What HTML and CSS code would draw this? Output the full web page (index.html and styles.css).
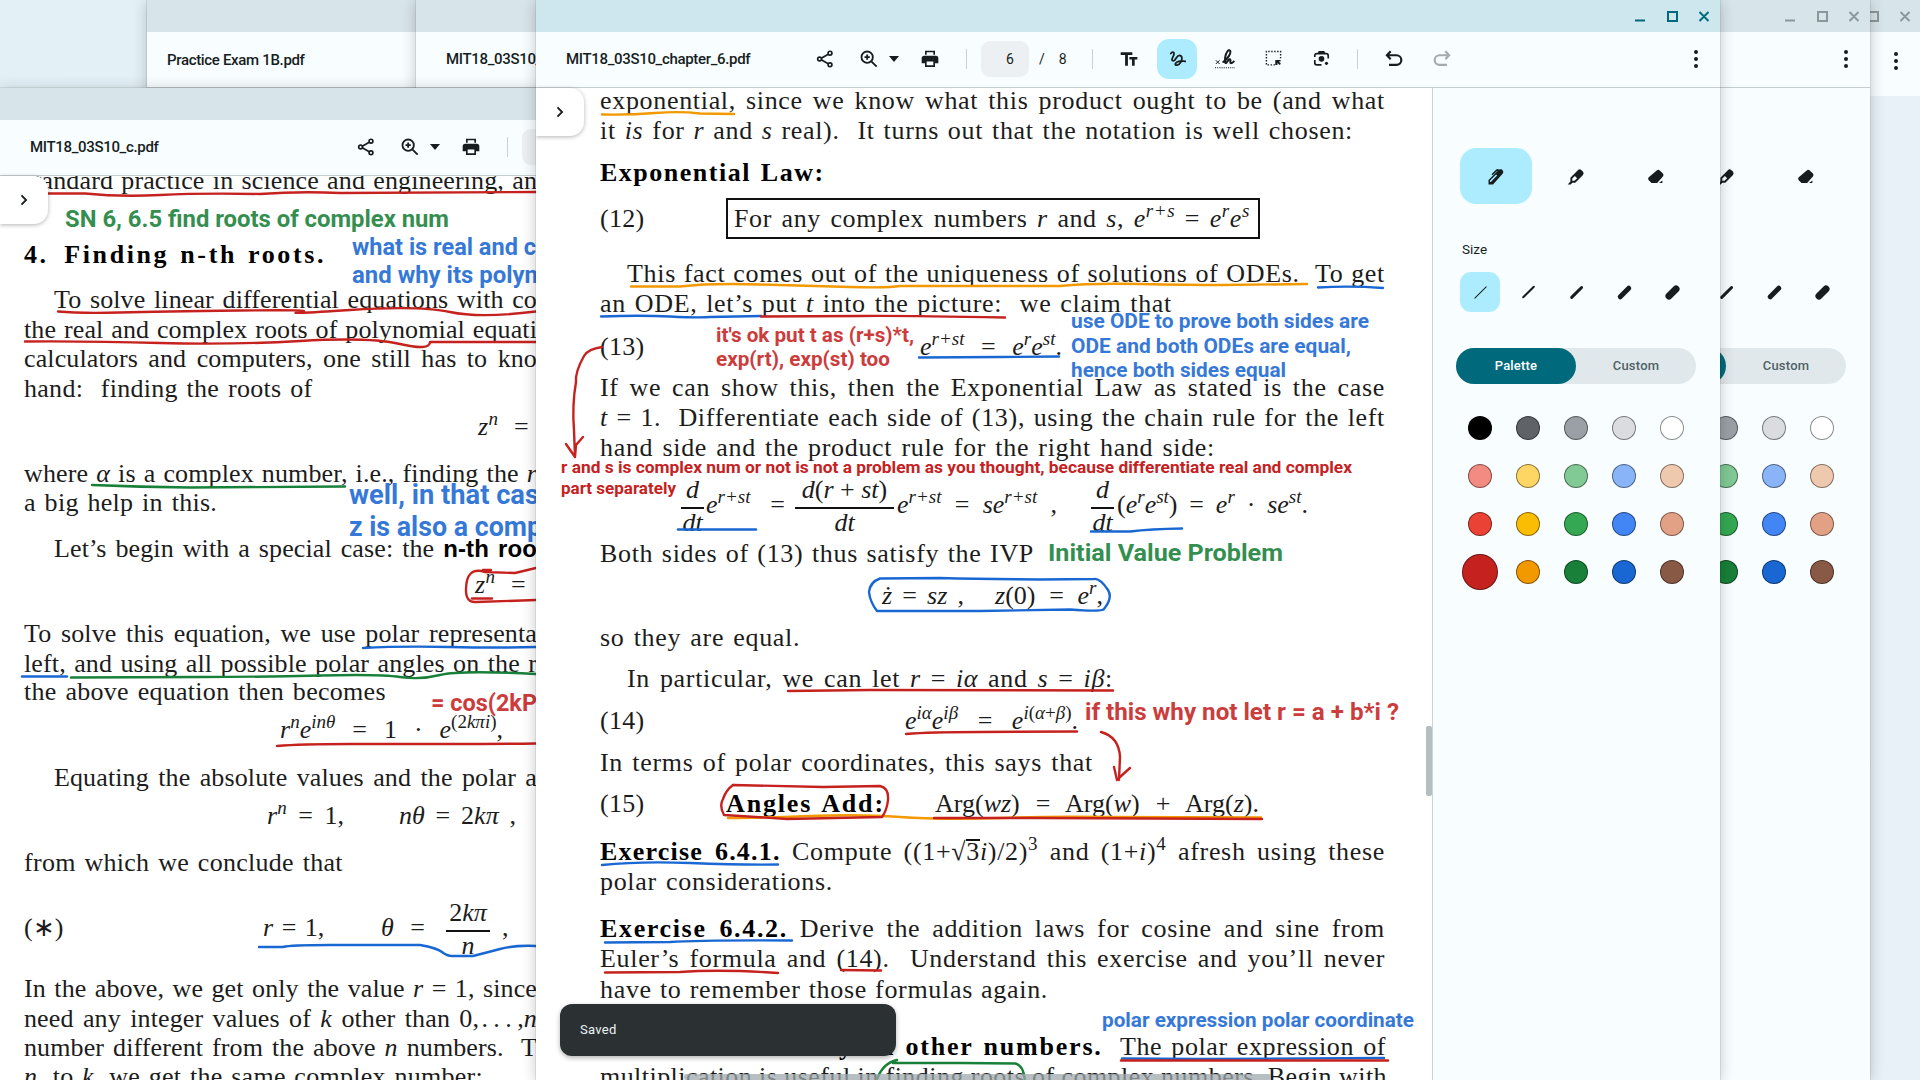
FILE: index.html
```html
<!DOCTYPE html>
<html lang="en">
<head>
<meta charset="utf-8">
<title>Gallery</title>
<link rel="stylesheet" href="styles.css">
</head>
<body>
<svg width="0" height="0" class="defs">
  <symbol id="share" viewBox="0 0 24 24"><g fill="none" stroke="currentColor" stroke-width="2"><circle cx="18" cy="5" r="2.3"/><circle cx="5.5" cy="12" r="2.3"/><circle cx="18" cy="19" r="2.3"/><path d="M7.5 11l8.4-4.8M7.5 13l8.4 4.8"/></g></symbol>
  <symbol id="zoom" viewBox="0 0 24 24"><g fill="none" stroke="currentColor" stroke-width="2.2"><circle cx="9.8" cy="9.8" r="6.8"/><path d="M14.8 14.8l6.4 6.4M9.8 6.6v6.4M6.6 9.8h6.4"/></g></symbol>
  <symbol id="print" viewBox="0 0 24 24"><path fill="currentColor" fill-rule="evenodd" d="M6 2h12v5H6zM8 4v3h8V4zM5 8h14a3 3 0 0 1 3 3v6h-4v4.500H6V17H2v-6a3 3 0 0 1 3-3zm3 7v4.500h8V15z"/></symbol>
  <symbol id="text" viewBox="0 0 24 24"><path fill="currentColor" d="M2 4h14v3.200h-5.300V20H7.300V7.200H2zM12.500 9.500H22v3h-3.200V20h-3.200v-7.500h-3.100z"/></symbol>
  <symbol id="ink" viewBox="0 0 24 24"><path fill="none" stroke="currentColor" stroke-width="2.500" stroke-linecap="round" d="M2.500 5C5 1.800 8.300 3 6.500 7.500S2.500 15 6 15.500 10 7.500 14.500 7.500s4.500 5.500 2 10-8.500 5-7.500 2 7-5 14-3.500"/></symbol>
  <symbol id="sign" viewBox="0 0 24 24"><g fill="none" stroke="currentColor"><path stroke-width="1.200" d="M1 13.500l4.500 4.500M5.500 13.500L1 18"/><path stroke-width="2.400" stroke-linecap="round" d="M10 15.500C15 12 20 5 18 2c-1.600-2-5 2-5.800 8-.5 5.500 0 8 1.500 6.500s3-5 4.400-4-.8 4.500 1 4.500 2.400-1 3.400-2"/><path stroke-width="1.400" stroke-dasharray="1.300 1.300" d="M0 22.500h24"/></g></symbol>
  <symbol id="select" viewBox="0 0 24 24"><path fill="none" stroke="currentColor" stroke-width="2" stroke-dasharray="2 2.200" d="M14 21H2V2h20v10"/><path fill="currentColor" d="M14.500 14H22v2.300h-2.500l3 3-1.900 1.900-3-3V21h-3.100z"/></symbol>
  <symbol id="lens" viewBox="0 0 24 24"><g fill="none" stroke="currentColor" stroke-width="2.400"><path d="M2.500 10V8a3 3 0 0 1 3-3h13a3 3 0 0 1 3 3v4M2.500 14v4a3 3 0 0 0 3 3h6.500"/></g><path fill="currentColor" d="M8 1.500h8L17.500 5h-11z"/><circle cx="12" cy="12.500" r="4" fill="currentColor"/><circle cx="19" cy="18.800" r="2.200" fill="currentColor"/></symbol>
  <symbol id="undo" viewBox="0 0 24 24"><path fill="none" stroke="currentColor" stroke-width="2.600" d="M8 2.800L3.500 7.500 8 12.200M3.500 7.500H15a5.700 5.700 0 0 1 0 11.600H6"/></symbol>
  <symbol id="dots" viewBox="0 0 24 24"><g fill="currentColor"><circle cx="12" cy="3.600" r="2.400"/><circle cx="12" cy="12" r="2.400"/><circle cx="12" cy="20.400" r="2.400"/></g></symbol>
  <symbol id="chevron" viewBox="0 0 24 24"><path fill="none" stroke="currentColor" stroke-width="2.200" d="M9 6.500l5.500 5.500L9 17.500"/></symbol>
  <symbol id="pen" viewBox="0 0 24 24"><path fill="currentColor" fill-rule="evenodd" d="M2 22v-6L14.500 3.600a2 2 0 0 0-1.500.7L7.500 9.800 6 8.300 12 2.300c1.500-1.300 3-1 4 0 2-1.200 4-.5 5 1s1 3.200-.5 4.700L8 22zm3-3.500L13.500 10l-1.400-1.400L4 16.800v1.700z"/></symbol>
  <symbol id="marker" viewBox="0 0 24 24"><path fill="currentColor" fill-rule="evenodd" d="M1 22l3.500-4V13L14.500 3a3.500 3.500 0 0 1 4.500-.5l2.500 2.500a3.500 3.500 0 0 1-.5 4.500L11 19.500H7L5 22zM7 14v3h3l3.500-3.500-3-3z"/></symbol>
  <symbol id="eraser" viewBox="0 0 24 24"><path fill="currentColor" d="M13 3.200a3 3 0 0 1 4 0l4.200 4.200a3 3 0 0 1 0 4L13.500 20H6l-3.700-3.800a3 3 0 0 1 0-4zM16 20l4.500-3.500V20z"/></symbol>
</svg>

<section class="window win-menu idle">
  <header class="titlebar"><svg class="ctl" viewBox="0 0 96 32"><path d="M48 12h9v9h-9zM79.500 12l9 9M88.500 12l-9 9"/></svg></header>
  <div class="toolbar tall"><svg class="icon"><use href="#dots"/></svg></div>
</section>

<section class="window win-exam idle">
  <header class="titlebar"></header>
  <div class="toolbar"><span class="name">Practice Exam 1B.pdf</span></div>
</section>

<section class="window win-chapter idle">
  <header class="titlebar"></header>
  <div class="toolbar"><span class="name">MIT18_03S10_</span></div>
</section>

<section class="window win-side idle">
  <header class="titlebar"><svg class="ctl" viewBox="0 0 96 32"><path d="M15 20.500h10M48 12h9v9h-9zM79.500 12l9 9M88.500 12l-9 9"/></svg></header>
  <div class="toolbar end"><svg class="icon"><use href="#dots"/></svg></div>
  <div class="body">
    <main class="page"></main>
    <aside class="panel">
      <div class="tools"><span class="tool"></span><span class="tool"><svg class="icon"><use href="#marker"/></svg></span><span class="tool"><svg class="icon"><use href="#eraser"/></svg></span></div>
      <h2 class="label">&nbsp;</h2>
      <div class="sizes"><span class="size on"><i class="s1"></i></span><span class="size"><i class="s2"></i></span><span class="size"><i class="s3"></i></span><span class="size"><i class="s4"></i></span><span class="size"><i class="s5"></i></span></div>
      <div class="tabs"><span class="tab on"></span><span class="tab">Custom</span></div>
      <div class="swatches">
        <b class="c-black"></b><b class="c-dgray"></b><b class="c-gray"></b><b class="c-lgray"></b><b class="c-white"></b>
        <b class="c-pink"></b><b class="c-lyellow"></b><b class="c-lgreen"></b><b class="c-lblue"></b><b class="c-peach"></b>
        <b class="c-red"></b><b class="c-yellow"></b><b class="c-green"></b><b class="c-blue"></b><b class="c-tan"></b>
        <b class="c-crimson"></b><b class="c-orange"></b><b class="c-dgreen"></b><b class="c-dblue"></b><b class="c-brown"></b>
      </div>
    </aside>
  </div>
</section>

<section class="window win-notes idle">
  <header class="titlebar"></header>
  <div class="toolbar">
    <span class="name">MIT18_03S10_c.pdf</span>
    <div class="actions">
      <svg class="icon"><use href="#share"/></svg>
      <svg class="icon zoomer"><use href="#zoom"/></svg><i class="caret"></i>
      <svg class="icon printer"><use href="#print"/></svg>
      <i class="rule"></i><span class="pagebox"></span>
    </div>
  </div>
  <div class="body">
    <main class="page notes">
      <p class="full">standard practice in science and engineering, an</p>
      <p><strong class="head">4.&ensp;Finding n-th roots.</strong></p>
      <p class="full in">To solve linear differential equations with co</p>
      <p class="full">the real and complex roots of polynomial equati</p>
      <p class="full">calculators and computers, one still has to kno</p>
      <p>hand:&nbsp; finding the roots of</p>
      <p class="eq e-zn"><i>z<sup>n</sup></i> =</p>
      <p class="full">where <i>α</i> is a complex number, i.e., finding the <i>r</i></p>
      <p>a big help in this.</p>
      <p class="full in">Let’s begin with a special case: the <b class="sans">n-th roo</b></p>
      <p class="eq e-zn2"><i>z<sup>n</sup></i> =</p>
      <p class="full">To solve this equation, we use polar representa</p>
      <p class="full">left, and using all possible polar angles on the r</p>
      <p>the above equation then becomes</p>
      <p class="eq e-polar"><i>r<sup>n</sup>e<sup>inθ</sup></i> = 1 · <i>e</i><sup>(2<i>kπi</i>)</sup>,</p>
      <p class="full in">Equating the absolute values and the polar a</p>
      <p class="eq e-split"><span class="w77"><i>r<sup>n</sup></i> = 1,</span><span class="w115"><i>nθ</i> = 2<i>kπ</i> ,</span></p>
      <p>from which we conclude that</p>
      <p class="star"><span>(∗)</span><span class="st-r"><i>r</i> = 1,</span><span class="st-t"><i>θ</i> =</span><span class="frac f42"><span>2<i>kπ</i></span><span><i>n</i></span></span><span class="st-c">,</span></p>
      <p class="full">In the above, we get only the value <i>r</i> = 1, since</p>
      <p class="full">need any integer values of <i>k</i> other than 0,&#8202;.&#8201;.&#8201;.&#8201;,<i>n</i></p>
      <p class="full">number different from the above <i>n</i> numbers.&nbsp; T</p>
      <p class="w458"><i>n</i>, to <i>k</i>, we get the same complex number:</p>
    </main>
    <svg class="ink" viewBox="0 176 536 904">
      <g class="red">
        <path d="M40 193.500L85 193.500Q120 197 160 195T260 194Q300 191 340 193L536 192"/>
        <path d="M58 311.500Q80 313.500 120 312.500T240 310.500T300 312T350 310T450 312T536 311.500"/>
        <path d="M25 341.500Q90 341 160 343T300 341T400 344T430 342L536 342"/>
        <path d="M536 568L515 573L485 572Q466 566 466 590Q466 603 476 602L536 600M472 598.500h20M483 570h8"/>
        <path d="M277 746Q300 744 350 744T450 744T536 743.500"/>
      </g>
      <g class="green">
        <path d="M92 485Q140 487 190 487.500L345 486.500"/>
        <path d="M71 677.500Q140 677 200 677T320 675.500T400 677T440 675T536 674"/>
      </g>
      <g class="blue">
        <path d="M363 648Q400 646 450 647T536 647"/><path d="M22 676.500H67"/>
        <path d="M259 947L283 947Q290 945 330 945L420 945Q437 948 442 952T452 956L473 956Q485 953 500 949T536 946"/>
      </g>
      <text class="tgreen" x="65" y="227" font-size="23.500" textLength="384" lengthAdjust="spacingAndGlyphs">SN 6, 6.5 find roots of complex num</text>
      <text class="tblue" x="352" y="255" font-size="23.500" textLength="184" lengthAdjust="spacingAndGlyphs">what is real and c</text>
      <text class="tblue" x="352" y="283" font-size="23.500" textLength="186" lengthAdjust="spacingAndGlyphs">and why its polyn</text>
      <text class="tblue" x="349" y="504" font-size="27" textLength="190" lengthAdjust="spacingAndGlyphs">well, in that cas</text>
      <text class="tblue" x="349" y="536" font-size="27" textLength="193" lengthAdjust="spacingAndGlyphs">z is also a comp</text>
      <text class="tred" x="431" y="710.500" font-size="23.500" textLength="106" lengthAdjust="spacingAndGlyphs">= cos(2kP</text>
    </svg>
    <span class="drawer"><svg class="icon"><use href="#chevron"/></svg></span>
  </div>
</section>

<section class="window win-main">
  <header class="titlebar"><svg class="ctl" viewBox="0 0 96 32"><path d="M15 20.500h10M48 12h9v9h-9zM79.500 12l9 9M88.500 12l-9 9"/></svg></header>
  <div class="toolbar">
    <span class="name">MIT18_03S10_chapter_6.pdf</span>
    <div class="actions">
      <svg class="icon"><use href="#share"/></svg>
      <svg class="icon zoomer"><use href="#zoom"/></svg><i class="caret"></i>
      <svg class="icon printer"><use href="#print"/></svg>
      <i class="rule"></i><span class="pagebox">6</span><span class="total"><span>/</span><span>8</span></span><i class="rule r2"></i>
      <span class="act"><svg class="icon"><use href="#text"/></svg></span>
      <span class="act on"><svg class="icon small"><use href="#ink"/></svg></span>
      <span class="act"><svg class="icon"><use href="#sign"/></svg></span>
      <span class="act"><svg class="icon small"><use href="#select"/></svg></span>
      <span class="act"><svg class="icon small"><use href="#lens"/></svg></span>
      <i class="rule r3"></i>
      <span class="act"><svg class="icon"><use href="#undo"/></svg></span>
      <span class="act off"><svg class="icon flip"><use href="#undo"/></svg></span>
    </div>
    <svg class="icon more"><use href="#dots"/></svg>
  </div>
  <div class="body">
    <main class="page chapter">
      <p class="full">exponential, since we know what this product ought to be (and what</p>
      <p class="w751">it <i>is</i> for <i>r</i> and <i>s</i> real).&nbsp; It turns out that the notation is well chosen:</p>
      <p><strong>Exponential Law:</strong></p>
      <p class="law"><span>(12)</span><span class="boxed">For any complex numbers <i>r</i> and <i>s</i>, <i>e<sup>r+s</sup></i> = <i>e<sup>r</sup>e<sup>s</sup></i></span></p>
      <p class="full in">This fact comes out of the uniqueness of solutions of ODEs.&nbsp; To get</p>
      <p class="w572">an ODE, let’s put <i>t</i> into the picture:&nbsp; we claim that</p>
      <p class="num"><span>(13)</span><span class="n13"><i>e<sup>r+st</sup></i> = <i>e<sup>r</sup>e<sup>st</sup></i>.</span></p>
      <p class="full">If we can show this, then the Exponential Law as stated is the case</p>
      <p class="full"><i>t</i> = 1.&nbsp; Differentiate each side of (13), using the chain rule for the left</p>
      <p class="w615">hand side and the product rule for the right hand side:</p>
      <p class="deriv"><span class="frac f24"><i>d</i><i>dt</i></span><span class="d1"><i>e<sup>r+st</sup></i> =</span><span class="frac f99"><span><i>d</i>(<i>r</i> + <i>st</i>)</span><i>dt</i></span><span class="d2"><i>e<sup>r+st</sup></i> = <i>se<sup>r+st</sup></i> ,</span><span class="frac f24"><i>d</i><i>dt</i></span><span class="d3">(<i>e<sup>r</sup>e<sup>st</sup></i>) = <i>e<sup>r</sup></i> · <i>se<sup>st</sup></i>.</span></p>
      <p class="w433">Both sides of (13) thus satisfy the IVP</p>
      <p class="ivp"><span class="i1"><i>ż</i> = <i>sz</i> ,</span><span class="i2"><i>z</i>(0) = <i>e<sup>r</sup></i>,</span></p>
      <p>so they are equal.</p>
      <p class="w512">In particular, we can let <i>r</i> = <i>iα</i> and <i>s</i> = <i>iβ</i>:</p>
      <p class="num"><span>(14)</span><span class="n14"><i>e<sup>iα</sup>e<sup>iβ</sup></i> = <i>e</i><sup><i>i</i>(<i>α</i>+<i>β</i>)</sup>.</span></p>
      <p class="w491">In terms of polar coordinates, this says that</p>
      <p class="num"><span>(15)</span><strong class="n15">Angles Add:</strong><span class="arg">Arg(<i>wz</i>) = Arg(<i>w</i>) + Arg(<i>z</i>).</span></p>
      <p class="full"><strong class="ex">Exercise 6.4.1.</strong> Compute ((1+<span class="root">√<u>3</u></span><i>i</i>)/2)<sup>3</sup> and (1+<i>i</i>)<sup>4</sup> afresh using these</p>
      <p>polar considerations.</p>
      <p class="full"><strong class="ex2">Exercise 6.4.2.</strong> Derive the addition laws for cosine and sine from</p>
      <p class="full">Euler’s formula and (14).&nbsp; Understand this exercise and you’ll never</p>
      <p class="w447">have to remember those formulas again.</p>
      <p class="tail"><strong class="t1">y on other numbers.</strong><span class="t2">The polar expression of</span></p>
      <p class="full tight">multiplication is useful in finding roots of complex numbers. Begin with</p>
    </main>
    <aside class="panel">
      <div class="tools"><span class="tool on"><svg class="icon"><use href="#pen"/></svg></span><span class="tool"><svg class="icon"><use href="#marker"/></svg></span><span class="tool"><svg class="icon"><use href="#eraser"/></svg></span></div>
      <h2 class="label">Size</h2>
      <div class="sizes"><span class="size on"><i class="s1"></i></span><span class="size"><i class="s2"></i></span><span class="size"><i class="s3"></i></span><span class="size"><i class="s4"></i></span><span class="size"><i class="s5"></i></span></div>
      <div class="tabs"><span class="tab on">Palette</span><span class="tab">Custom</span></div>
      <div class="swatches">
        <b class="c-black"></b><b class="c-dgray"></b><b class="c-gray"></b><b class="c-lgray"></b><b class="c-white"></b>
        <b class="c-pink"></b><b class="c-lyellow"></b><b class="c-lgreen"></b><b class="c-lblue"></b><b class="c-peach"></b>
        <b class="c-red"></b><b class="c-yellow"></b><b class="c-green"></b><b class="c-blue"></b><b class="c-tan"></b>
        <b class="c-crimson picked"></b><b class="c-orange"></b><b class="c-dgreen"></b><b class="c-dblue"></b><b class="c-brown"></b>
      </div>
    </aside>
    <svg class="ink" viewBox="536 88 896 992">
      <g class="orange">
        <path d="M602 114.500Q630 115 655 113T700 113.500L734 114"/>
        <path d="M631 286.500L680 286.500Q710 283 760 284.500T850 287T900 286H1060Q1090 283 1140 284T1220 285L1307 284"/>
        <path d="M728 818Q760 818 810 816T900 817T1000 818T1100 817L1261 817.500"/>
      </g>
      <g class="blue">
        <path d="M1318 287.500Q1350 285.500 1383 288"/>
        <path d="M601 316.500Q640 315 670 316.500T710 317L761 316"/>
        <path d="M919 357.500L1000 357L1059 356.500"/>
        <path d="M678 529.500H756"/><path d="M1091 531.500H1130Q1150 529 1182 528.500"/>
        <path d="M877 611L980 611L1070 609.500Q1102 612 1104 609Q1113 598 1108 590Q1100 578 1094 579L1040 579.500Q980 579 940 578L880 578.500Q870 582 869 592Q870 602 877 611"/>
        <path d="M602 865Q640 861 690 863T778 864.500"/><path d="M605 942.500L670 942Q700 940 792 940.500"/>
        <path d="M1122 1058.500L1200 1059L1384 1058"/>
      </g>
      <g class="red">
        <path d="M761 316.500L860 316Q900 315.500 1005 317.500"/>
        <path d="M602 347Q588 349 584 356Q575 372 576 382Q572 405 574 430L575 457M566 444L575 457L576 445L583 437"/>
        <path d="M788 691L870 690L1113 690.500"/>
        <path d="M906 734Q930 732 980 732L1077 731.500"/>
        <path d="M1101 732Q1119 737 1120 757L1119 780M1114 767L1117 780Q1122 775 1130 768"/>
        <path d="M733 785L823 787L880 786Q889 788 888 800Q887 810 882 817Q830 818 787 819L724 815Q719 806 723 799Q726 790 733 785"/>
        <path d="M934 818L1040 818L1262 819"/>
        <path d="M605 972.500L680 972Q720 969 778 973"/><path d="M841 970L881 970.500"/>
        <path d="M1121 1060.500H1388"/>
      </g>
      <g class="green"><path d="M876 1082Q882 1063 897 1060M893 1063L960 1063L1015 1063.500Q1024 1065 1025 1082"/></g>
      <text class="tred" x="716" y="341.500" font-size="21" textLength="198" lengthAdjust="spacingAndGlyphs">it's ok put t as (r+s)*t,</text>
      <text class="tred" x="716" y="366" font-size="21" textLength="174" lengthAdjust="spacingAndGlyphs">exp(rt), exp(st) too</text>
      <text class="tblue" x="1071" y="328" font-size="21" textLength="298" lengthAdjust="spacingAndGlyphs">use ODE to prove both sides are</text>
      <text class="tblue" x="1071" y="352.500" font-size="21" textLength="280" lengthAdjust="spacingAndGlyphs">ODE and both ODEs are equal,</text>
      <text class="tblue" x="1071" y="377" font-size="21" textLength="215" lengthAdjust="spacingAndGlyphs">hence both sides equal</text>
      <text class="tred solid" x="561" y="473" font-size="16.500" textLength="791" lengthAdjust="spacingAndGlyphs">r and s is complex num or not is not a problem as you thought, because differentiate real and complex</text>
      <text class="tred solid" x="561" y="494" font-size="16.500" textLength="115" lengthAdjust="spacingAndGlyphs">part separately</text>
      <text class="tgreen" x="1048" y="561" font-size="24" textLength="235" lengthAdjust="spacingAndGlyphs">Initial Value Problem</text>
      <text class="tred" x="1085" y="720" font-size="24" textLength="314" lengthAdjust="spacingAndGlyphs">if this why not let r = a + b*i ?</text>
      <text class="tblue" x="1102" y="1027" font-size="21" textLength="312" lengthAdjust="spacingAndGlyphs">polar expression polar coordinate</text>
    </svg>
    <i class="vbar"></i><i class="hbar"></i>
    <span class="drawer"><svg class="icon"><use href="#chevron"/></svg></span>
    <div class="toast">Saved</div>
  </div>
</section>
</body>
</html>
```
FILE: styles.css
```css
* { box-sizing: border-box; }
body { margin: 0; width: 1920px; height: 1080px; overflow: hidden; position: relative; background: linear-gradient(90deg, #e3f1f6, #e9f1f8); font-family: Roboto, "Liberation Sans", sans-serif; color: #171d1e; }
.defs { position: absolute; }
p, h2 { margin: 0; }

.window { position: absolute; top: 0; width: 1184px; height: 1080px; display: flex; flex-direction: column; overflow: hidden; background: #f8fdff; box-shadow: 0 0 1px rgba(0,0,0,.45), 0 2px 14px rgba(0,0,0,.22); }
.win-menu { left: 1000px; width: 920px; height: 96px; box-shadow: none; }
.win-exam { left: 147px; height: 700px; width: 600px; }
.win-chapter { left: 416px; height: 700px; width: 600px; }
.win-side { left: 686px; }
.win-notes { left: 0; top: 88px; height: 992px; }
.win-main { left: 536px; }

.titlebar { flex: none; height: 32px; display: flex; justify-content: flex-end; background: #cee7ee; color: #006a7c; }
.idle .titlebar { background: #d7e4e9; color: #8b9799; }
.ctl { width: 96px; height: 32px; margin-right: 4px; flex: none; fill: none; stroke: currentColor; stroke-width: 2; }
.win-menu .ctl { margin-right: 3px; }

.toolbar { flex: none; height: 56px; display: flex; align-items: center; padding: 0 13px 2px 30px; border-bottom: 1px solid #c5ced1; background: #f8fdff; }
.win-menu .toolbar { height: 64px; padding: 0 14px 7px 0; justify-content: flex-end; border: 0; }
.toolbar.end { justify-content: flex-end; padding-right: 14px; }
.win-exam .toolbar { padding: 0 0 0 20px; }
.win-notes .toolbar { padding-bottom: 1px; }
.name { width: 283px; flex: none; font-size: 15px; font-weight: 500; letter-spacing: -.330px; white-space: nowrap; color: #171d1e; }
.win-notes .name { width: 324px; }
.icon { width: 20px; height: 20px; flex: none; display: block; }
.icon.small { width: 17px; height: 17px; }
.actions { display: flex; align-items: center; }
.win-main .actions { margin-left: -34px; }
.win-notes .actions { margin-left: 2px; }
.zoomer { margin-left: 24px; }
.caret { margin-left: 10px; border: 5px solid transparent; border-top: 6px solid #171d1e; border-bottom: 0; }
.printer { margin-left: 21px; }
.rule { width: 1px; height: 20px; background: #c9d1d4; margin-left: 26px; }
.pagebox { width: 48px; height: 36px; margin-left: 14px; border-radius: 9px; background: #ecf0f3; font-size: 14px; line-height: 36px; padding-left: 25px; }
.total { display: flex; gap: 14px; margin-left: 10px; font-size: 14px; width: 36px; }
.r2 { margin-left: 17px; }
.act { width: 40px; height: 40px; margin-right: 8px; border-radius: 12px; display: grid; place-items: center; }
.r2 + .act { margin-left: 16px; }
.act.on { background: #adecff; }
.r3 { margin: 0 16px 0 8px; }
.act.off { color: #a4abad; }
.flip { transform: scaleX(-1); }
.more { margin-left: auto; margin-right: 1px; }

.body { flex: 1; min-height: 0; display: flex; position: relative; }
.page { flex: 1; background: #fff; overflow: hidden; min-width: 0; }
.notes, .chapter { display: grid; align-items: end; align-content: start; padding-top: 1.300px; font: 26px/30px "Liberation Serif", serif; letter-spacing: .680px; word-spacing: 2px; color: #1c1c1c; }
.chapter { padding-left: 64px; grid-template-rows: 27px 30px 42px 45.300px 55.500px 30.200px 42.300px 41px 30px 30.300px 56.700px 49.700px 41.600px 41.700px 41px 42.700px 41.300px 41.700px 47.600px 30.700px 46.700px 30px 30.600px 57px 30.700px; }
.notes { padding-left: 24px; letter-spacing: .280px; grid-template-rows: 18.500px 74.400px 44.600px 30px 29.400px 30px 38.300px 46.700px 29.300px 45.700px 36.300px 48.700px 30px 28.300px 38px 48px 38px 46.700px 65.300px 60.700px 30px 29px 29.300px; }
.page p { height: 30px; white-space: nowrap; }
.full, .w751, .w572, .w615, .w433, .w512, .w491, .w447, .w458, .e-zn, .e-zn2, .e-polar, .w77, .w115, .boxed, .n13, .n14, .arg, .d1, .d2, .d3, .i1, .i2, .t2 { text-align: justify; text-align-last: justify; }
.page p.full, .page p[class^="w"] { word-spacing: 0; }
.chapter .full { width: 785px; }
.notes .full { width: 513px; letter-spacing: .120px; }
.chapter .tight { letter-spacing: .450px; }
.full.in { padding-left: 27px; }
.notes .full.in { padding-left: 30px; }
.w751 { width: 753px; } .w572 { width: 572px; } .w615 { width: 615px; } .w433 { width: 434px; }
.page .w512 { width: 486px; margin-left: 27px; } .w491 { width: 493px; } .w447 { width: 448px; } .w458 { width: 459px; }
strong { letter-spacing: 1.500px; color: #000; }
.head { letter-spacing: 2.600px; }
.sans { font-family: "Liberation Sans", sans-serif; font-size: 24px; color: #000; }
sup { font-size: 19px; line-height: 0; vertical-align: 10px; }
.law, .num, .star, .deriv, .ivp, .tail, .e-split { display: flex; letter-spacing: 0; }
.law > :first-child, .num > :first-child { width: 126px; flex: none; letter-spacing: .300px; }
.boxed { width: 534px; height: 41px; margin-top: -6px; padding: 4px 8px 0 6px; border: 2px solid #111; letter-spacing: .600px; }
.n13 { width: 142px; margin-left: 194px; }
.n14 { width: 173px; margin-left: 179px; }
.n15 { width: 160px; margin-left: 0; letter-spacing: 1.850px; }
.arg { width: 324px; margin-left: 49px; }
.deriv { margin-left: 81px; word-spacing: 0; }
.frac { display: flex; flex-direction: column; align-items: center; flex: none; height: 62px; margin-top: -15px; line-height: 30px; }
.frac > :first-child { height: 34px; }
.frac > :last-child { border-top: 2px solid #111; width: 100%; text-align: center; padding-top: 0; line-height: 28px; }
.f24 { width: 23px; } .f99 { width: 99px; } .f42 { width: 44px; }
.d1 { width: 79px; margin: 0 10px 0 2px; } .d2 { width: 160px; margin: 0 34px 0 3px; } .d3 { width: 191px; margin-left: 3px; }
.ivp { margin-left: 282px; } .i1 { width: 82px; } .i2 { width: 108px; margin-left: 31px; }
.t1 { width: 279px; margin-left: 239px; letter-spacing: 1.800px; } .t2 { width: 262px; margin-left: 2px; letter-spacing: .600px; }
.ex { letter-spacing: 1.200px; } .ex2 { letter-spacing: 1.650px; }
.root u { display: inline-block; line-height: 21px; text-decoration: none; border-top: 2px solid #111; }
.e-zn { margin-left: 454px; width: 51px; } .e-zn2 { margin-left: 451px; width: 51px; }
.e-polar { margin-left: 256px; width: 223px; letter-spacing: 0; }
.e-split { margin-left: 243px; } .w77 { width: 77px; } .w115 { margin-left: 55px; width: 117px; }
.star > :first-child { width: 39px; }
.st-r { margin-left: 200px; width: 64px; } .st-t { margin-left: 54px; width: 48px; word-spacing: 10px; } .star .frac { margin-left: 17px; } .st-c { margin-left: 12px; }

.ink { position: absolute; left: 0; top: 0; pointer-events: none; }
.win-main .ink { width: 896px; height: 992px; }
.win-notes .ink { width: 536px; height: 904px; }
.ink path { fill: none; stroke: currentColor; stroke-width: 2.400; stroke-linecap: round; stroke-linejoin: round; }
.ink text { font-family: Roboto, sans-serif; font-weight: 700; opacity: .88; }
.ink .solid { opacity: 1; }
.red { color: #c5221f; } .green { color: #188038; } .blue { color: #1967d2; } .orange { color: #f29900; }
.tred { fill: #c5221f; } .tgreen { fill: #188038; } .tblue { fill: #1967d2; }

.drawer { position: absolute; left: 0; top: 0; width: 48px; height: 48px; border-radius: 0 14px 14px 0; background: #fff; display: grid; place-items: center; box-shadow: 0 1px 4px rgba(0,0,0,.3); }
.vbar { position: absolute; left: 890px; top: 638px; width: 6px; height: 70px; border-radius: 2px; background: #b6bdc0; }
.hbar { position: absolute; left: 148px; bottom: 0; width: 587px; height: 6px; border-radius: 2px; background: rgba(160,170,173,.75); }
.toast { position: absolute; left: 24px; top: 916px; width: 336px; height: 52px; padding-left: 20px; border-radius: 12px; background: #2b3133; color: #ecf2f4; font-size: 13px; letter-spacing: .300px; line-height: 51px; box-shadow: 0 2px 5px rgba(0,0,0,.3); }

.panel { flex: none; width: 288px; padding: 60px 24px 0 23px; border-left: 1px solid #c9d3d6; background: #f8fdff; display: flex; flex-direction: column; }
.tools { display: flex; gap: 8px; padding-left: 4px; }
.tool { width: 72px; height: 56px; border-radius: 16px; display: grid; place-items: center; }
.tool .icon { width: 18px; height: 18px; margin-top: 2px; }
.tool.on, .size.on { background: #adecff; }
.label { font-size: 13.500px; font-weight: 400; line-height: 16px; margin: 37px 0 0 6px; }
.sizes, .swatches { display: grid; grid-template-columns: repeat(5, 48px); justify-items: center; align-items: center; }
.sizes { margin-top: 15px; }
.size { width: 40px; height: 40px; border-radius: 11px; display: grid; place-items: center; }
.size i { width: 17px; height: 2px; border-radius: 5px; background: #171d1e; transform: rotate(-45deg); }
.size .s1 { height: 1px; } .size .s3 { height: 2.600px; } .size .s4 { height: 5px; } .size .s5 { height: 7px; }
.tabs { display: flex; width: 240px; height: 36px; margin-top: 36px; border-radius: 18px; background: #e1e8eb; }
.tab { flex: 1; border-radius: 18px; text-align: center; font-size: 13px; font-weight: 500; letter-spacing: .200px; line-height: 35px; color: #4f6166; }
.tab.on { background: #006a7c; color: #fff; }
.swatches { grid-auto-rows: 48px; margin-top: 20px; }
.swatches b { width: 24px; height: 24px; border-radius: 50%; border: 1px solid rgba(0,0,0,.45); }
.swatches .picked { width: 36px; height: 36px; }
.c-black { background: #000; } .c-dgray { background: #5f6368; } .c-gray { background: #9aa0a6; } .c-lgray { background: #dadce0; } .c-white { background: #fff; }
.c-pink { background: #f28b82; } .c-lyellow { background: #fdd663; } .c-lgreen { background: #81c995; } .c-lblue { background: #8ab4f8; } .c-peach { background: #eec9ae; }
.c-red { background: #ea4335; } .c-yellow { background: #fbbc04; } .c-green { background: #34a853; } .c-blue { background: #4285f4; } .c-tan { background: #e2a185; }
.c-crimson { background: #c5221f; } .c-orange { background: #f29900; } .c-dgreen { background: #188038; } .c-dblue { background: #1967d2; } .c-brown { background: #885945; }
```
